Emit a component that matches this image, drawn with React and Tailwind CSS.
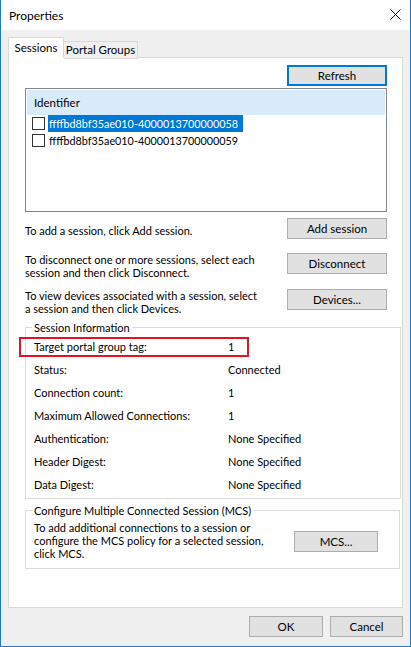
import React from "react"

const sessions = [
  { id: "ffffbd8bf35ae010-4000013700000058", selected: true },
  { id: "ffffbd8bf35ae010-4000013700000059", selected: false },
]

const info = [
  ["Target portal group tag:", "1"],
  ["Status:", "Connected"],
  ["Connection count:", "1"],
  ["Maximum Allowed Connections:", "1"],
  ["Authentication:", "None Specified"],
  ["Header Digest:", "None Specified"],
  ["Data Digest:", "None Specified"],
]

const Button = ({ children, className = "", focused = false }) => (
  <button
    type="button"
    className={`h-[21px] bg-[#e1e1e1] text-[#000] text-[11.5px] leading-none flex items-center justify-center shrink-0 ${
      focused ? "border-2 border-[#0078d7]" : "border border-[#adadad]"
    } ${className}`}
  >
    {children}
  </button>
)

const App = () => {
  return (
    <div
      className="w-[411px] h-[647px] flex flex-col bg-[#f0f0f0] border-x border-b border-[#1a7ad4] text-[11px] text-black overflow-hidden"
      style={{ fontFamily: 'Lato, "Liberation Sans", sans-serif' }}
    >
      {/* title bar */}
      <div className="h-[30px] bg-white flex items-center justify-between pl-[8px] pr-[9px] shrink-0">
        <span className="text-[12px] pt-[1px]">Properties</span>
        <svg width="11" height="11" viewBox="0 0 11 11" className="mb-[1px]">
          <path d="M0.5 0.5 L10.5 10.5 M10.5 0.5 L0.5 10.5" stroke="#111" strokeWidth="1" />
        </svg>
      </div>

      <div className="flex-1 flex flex-col pl-[7px] pr-[7px] pt-[7px]">
        {/* tabs */}
        <div className="flex items-end h-[21px] relative z-10">
          <div className="h-[21px] w-[56px] bg-white border border-b-0 border-[#d9d9d9] flex items-center justify-center text-[11.5px]">
            Sessions
          </div>
          <div className="h-[18px] w-[74px] bg-[#f0f0f0] border border-l-0 border-[#d9d9d9] flex items-center justify-center mb-[-1px] text-[11.5px]">
            Portal Groups
          </div>
        </div>

        {/* tab panel */}
        <div className="h-[551px] -mt-[1px] bg-white border border-[#d9d9d9] flex flex-col pl-[16px] pr-[1px] pt-[7px]">
          <div className="flex justify-end mr-[14px]">
            <Button focused className="w-[100px]">Refresh</Button>
          </div>

          {/* session list */}
          <div className="mt-[2px] mr-[14px] h-[124px] border border-[#828790] bg-white p-[1px]">
            <div className="h-[25px] bg-[#d9ebf9] flex items-center pl-[7px] text-[11.5px]">Identifier</div>
            {sessions.map((s) => (
              <div key={s.id} className="h-[17px] flex items-center pl-[5px]">
                <span className="w-[13px] h-[13px] border border-[#333] bg-white mr-[3px] shrink-0" />
                <span
                  className={`h-[17px] leading-[17px] pl-[1px] pr-[5px] text-[10.8px] ${
                    s.selected ? "bg-[#0078d7] text-white" : ""
                  }`}
                >
                  {s.id}
                </span>
              </div>
            ))}
          </div>

          {/* actions */}
          <div className="mt-[6px] mr-[14px] flex justify-between items-start">
            <p className="mt-[5px] leading-[15px]">To add a session, click Add session.</p>
            <Button className="w-[100px]">Add session</Button>
          </div>
          <div className="mt-[14px] mr-[14px] flex justify-between items-start">
            <p className="leading-[13px]">
              To disconnect one or more sessions, select each
              <br />
              session and then click Disconnect.
            </p>
            <Button className="w-[100px]">Disconnect</Button>
          </div>
          <div className="mt-[10px] mr-[14px] flex justify-between items-start">
            <p className="leading-[13px]">
              To view devices associated with a session, select
              <br />a session and then click Devices.
            </p>
            <Button className="w-[100px]">Devices...</Button>
          </div>

          {/* session information */}
          <div className="mt-[12px] h-[172px] border border-[#dcdcdc] relative pl-[8px] pt-[8px]">
            <span className="absolute -top-[8px] left-[6px] bg-white px-[2px] leading-[15px]">
              Session Information
            </span>
            {info.map(([label, value], i) => (
              <div key={label} className="h-[23px] flex items-center relative">
                {i === 0 && (
                  <span className="absolute left-[-15px] top-[1px] w-[230px] h-[20px] border-2 border-[#e81123]" />
                )}
                <span className="w-[194px]">{label}</span>
                <span>{value}</span>
              </div>
            ))}
          </div>

          {/* MCS */}
          <div className="mt-[11px] h-[59px] mr-[1px] border border-[#dcdcdc] relative pl-[8px] pr-[21px] flex items-center justify-between">
            <span className="absolute -top-[8px] left-[6px] bg-white px-[2px] leading-[15px]">
              Configure Multiple Connected Session (MCS)
            </span>
            <p className="leading-[13px] mt-[1px]">
              To add additional connections to a session or
              <br />
              configure the MCS policy for a selected session,
              <br />
              click MCS.
            </p>
            <Button className="w-[84px] mt-[4px]">MCS...</Button>
          </div>
        </div>

        {/* footer */}
        <div className="flex justify-end gap-[7px] mt-[8px]">
          <Button className="w-[74px]">OK</Button>
          <Button className="w-[73px]">Cancel</Button>
        </div>
      </div>
    </div>
  )
}

export default App
